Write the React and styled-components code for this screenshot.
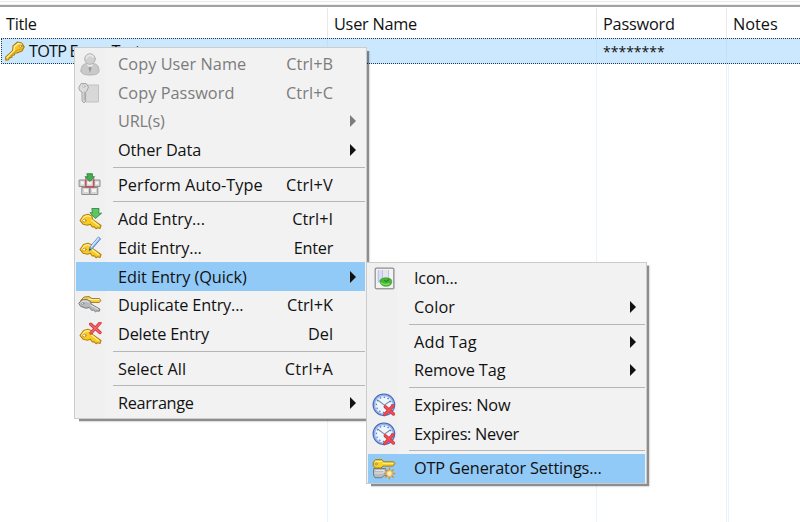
import React from "react";
import styled, { createGlobalStyle } from "styled-components";

const Global = createGlobalStyle`
  * { box-sizing: border-box; }
  body { margin: 0; background: #fff; overflow: hidden; }
`;

const Window = styled.div`
  position: relative;
  display: flex;
  flex-direction: column;
  width: 800px;
  height: 522px;
  overflow: hidden;
  background: #fff;
  color: #111;
  font: 16.3px/28px "Open Sans", "Noto Sans", sans-serif;
  white-space: pre;
`;
const TopEdge = styled.div`
  flex: none;
  height: 7px;
  border-bottom: 2px solid #a2a2a2;
  background: linear-gradient(#fff 0 1px, #e9e9e9 1px 2px, #fff 2px 4px, #eee 4px 5px);
`;
const Columns = styled.div`
  display: grid;
  grid-template-columns: 328px 269px 130px 1fr;
`;
const Header = styled(Columns)`
  flex: none;
  height: 31px;
  padding-top: 1px;
`;
const HeaderCell = styled.div`
  padding: 2px 0 0 6px;
  border-right: 1px solid #e6e9ec;
  letter-spacing: ${(p) => p.$track || 0}px;
  &:last-child { border-right: 0; }
`;
const EntryRow = styled(Columns)`
  flex: none;
  height: 26px;
  margin-left: 1px;
  border: 1px dotted #26384a;
  border-right: 0;
  background: #cce8ff;
  grid-template-columns: 326px 269px 130px 1fr;
`;
const EntryCell = styled.div`
  display: flex;
  align-items: center;
  height: 24px;
  padding: 1px 0 0 6px;
  line-height: 23px;
  border-right: 1px solid #c0e0f8;
  letter-spacing: ${(p) => p.$track || 0}px;
  svg { margin: -2px 3px 0 -4px; flex: none; }
  &:last-child { border-right: 0; }
`;
const Mask = styled.span`
  padding-bottom: 1px;
  font-size: 14px;
  letter-spacing: 0;
`;
const Body = styled(Columns)`
  flex: 1;
`;
const BodyCell = styled.div`
  border-right: 1px solid #e8f3fb;
  &:last-child { border-right: 0; border-left: 1px solid #e8f3fb; margin-left: 1px; }
`;
const Menu = styled.div`
  --gutter: ${(p) => p.$gutter}px;
  position: absolute;
  left: ${(p) => p.$x}px;
  top: ${(p) => p.$y}px;
  width: ${(p) => p.$w}px;
  padding: 1.6px 1px 0.5px;
  border: 1px solid #ccc;
  background: linear-gradient(90deg, #f0f0f0 0 30px, #f2f2f2 31px);
  box-shadow: 2px 2px 1px rgba(0, 0, 0, 0.4), 3px 3px 2px rgba(0, 0, 0, 0.08);
  clip-path: polygon(0 0, 100% 0, 100% 4px, calc(100% + 6px) 4px, calc(100% + 6px) calc(100% + 6px), 5px calc(100% + 6px), 5px 100%, 0 100%);
`;
const Item = styled.div`
  display: grid;
  grid-template-columns: var(--gutter) 1fr auto 32px;
  align-items: center;
  height: 28.75px;
  color: ${(p) => (p.$disabled ? "#7c7c7c" : "#111")};
  background: ${(p) => (p.$active ? "#91c9f7" : "transparent")};
`;
const IconSlot = styled.span`
  display: flex;
  padding-left: calc((var(--gutter) - 38px) / 2);
`;
const Label = styled.span`
  letter-spacing: ${(p) => p.$track}px;
`;
const Shortcut = styled.span`
  letter-spacing: ${(p) => p.$track}px;
`;
const Arrow = styled.span`
  justify-self: end;
  margin-right: 9px;
  border-left: 6.5px solid currentColor;
  border-top: 6px solid transparent;
  border-bottom: 6px solid transparent;
`;
const Separator = styled.div`
  height: 5.75px;
  padding: 2px 0 0 calc(var(--gutter) - 5px);
  &::after {
    content: "";
    display: block;
    height: 1px;
    background: #b6b6b6;
  }
`;

const Svg = (p) => <svg width={p.size || 24} height={p.size || 24} viewBox="0 0 24 24" strokeLinejoin="round" strokeLinecap="round" fill="none">{p.children}</svg>;

const SideKey = ({ fill = "#f8cb22", edge = "#b58312", shine = "#fff09a" }) => (
  <g>
    <path d="M2 13.5 5.5 8.5 10 7.2 14 9 14.5 12.4 23 18.5 22 21.5 19.5 20.8 18.2 21.8 16 19.6 14.3 20 12.2 17.2 9.5 18.2 5 17.2Z" fill={fill} stroke={edge} strokeWidth="1.1" />
    <path d="M4 13.2 6.5 9.6 10 8.6 12.6 9.8M13.5 13 20.5 18.4" stroke={shine} strokeWidth="1.2" />
    <ellipse cx="6.3" cy="13.6" rx="1.7" ry="1.4" fill="#fff" stroke={edge} strokeWidth=".8" />
  </g>
);
const DownArrow = () => <path d="M14.2 1.5h6.8l-.4 4.7h3L17.4 11.5 12 5.7h2Z" fill="#5cc665" stroke="#2f8c40" strokeWidth=".9" />;
const RedCross = () => (
  <g>
    <path d="M12.7 2.2 22 10.5M22 1 13 11" stroke="#d23a40" strokeWidth="3.3" />
    <path d="M12.7 2.2 22 10.5M22 1 13 11" stroke="#f2666b" strokeWidth="1.5" />
  </g>
);

const icons = {
  user: (
    <Svg>
      <path d="M3 19c0-4 1.5-7 5.2-7.3h7.6C19.5 12 21 15 21 19c0 2.6-3 4-9 4s-9-1.4-9-4Z" fill="#c9c9c9" stroke="#b4b4b4" />
      <path d="M8.5 12.2 12 16l3.5-3.8Z" fill="#eee" />
      <path d="m12 14-1.4 2.2L12 21l1.4-4.8Z" fill="#999" />
      <circle cx="12" cy="7" r="5.3" fill="#d0d0d0" stroke="#b4b4b4" />
      <path d="M8.5 6c1-3 5-3.5 6.5-1" stroke="#e8e8e8" strokeWidth="1.7" />
    </Svg>
  ),
  password: (
    <Svg>
      <path d="M8 4h12.5v17H8Z" fill="#d8d8d8" stroke="#c2c2c2" />
      <path d="M1 6.2 3 2.5h5.2L10.5 6 9 9.8 7.6 11v9L6 22l-2-2V11L2 9.8Z" fill="#dcdcdc" stroke="#a5a5a5" />
      <circle cx="5.8" cy="5.3" r="1.2" fill="#f6f6f6" stroke="#aaa" strokeWidth=".7" />
      <path d="M6.2 11v8" stroke="#aaa" />
    </Svg>
  ),
  autotype: (
    <Svg>
      <g fill="#d5d5d5" stroke="#8e8e8e">
        <path d="M1.5 7h5.8v6.5H1.5ZM8.3 7h7v6.5h-7ZM16.3 7H22v6.5h-5.7ZM4.2 14.5h7.3v7H4.2ZM12.5 14.5h7.3v7h-7.3Z" />
      </g>
      <path d="M3 8.5h3v3H3ZM9.5 8.5h4v3h-4ZM17.5 8.5h3v3h-3ZM6 16h4v3H6ZM14 16h4v3h-4Z" fill="#f4f4f4" />
      <path d="M7.8 5.5v8.4h8V5.5" stroke="#d33c48" strokeWidth="1.1" />
      <path d="M9.2.7h5.2v3h2.2L11.8 8.5 7 3.7h2.2Z" fill="#46ad50" stroke="#267c37" strokeWidth=".8" />
    </Svg>
  ),
  add: <Svg><SideKey /><DownArrow /></Svg>,
  edit: (
    <Svg>
      <SideKey />
      <path d="m11.2 14.5 1.2-4 8-9.5 2.2 1.8-8.1 9.6Z" fill="#9cc3f6" stroke="#4774bd" strokeWidth=".9" />
      <path d="m13.3 10.5 7.3-8.3" stroke="#e1f0ff" strokeWidth="1.1" />
      <path d="m11.2 14.5.7-2.2 1.1.9Z" fill="#333" />
    </Svg>
  ),
  duplicate: (
    <Svg>
      <path d="m3 7 3-3 5-.5 3 2h7.5l1.5 2.2-2 1.8H11L5 11Z" fill="#f6cd42" stroke="#aa8129" />
      <path d="M10 6.5h11" stroke="#fff0a6" />
      <g transform="translate(0 -1)"><path d="m1 11 3-3.2 5-.3 3.8 2 .2 2.5 9 5.2-.7 2-2.5-.3-1.2 1.1-2-2-2 .3-2.2-2.8-3.4.7L3 14.5Z" fill="#b8b9bb" stroke="#77797c" /><path d="m3 10.5 2-1.4h4l2 1.4M13 13.2l7 4" stroke="#e7e7e7" /><circle cx="4.8" cy="11.5" r="1" fill="#fff" stroke="#77797c" strokeWidth=".6" /></g>
    </Svg>
  ),
  delete: <Svg><SideKey /><RedCross /></Svg>,
  picture: (
    <Svg>
      <rect x="3.2" y="2.2" width="18.5" height="20.3" rx="1" fill="#f3f3f3" stroke="#8c8c8c" strokeWidth="1.2" />
      <path d="M5.3 4h5.3v13H5.3Z" fill="#d8ddf5" /><path d="M11 4h6v12h-6Z" fill="#e5e5ee" />
      <path d="M6.5 4.5v11M10.5 4.5v9M16.5 4.5v7" stroke="#bdc4e5" />
      <path d="M8 15c0-2 2.5-3.2 6-3.2 3.8 0 5.8 1.3 5.8 3.7 0 3-2 4.8-5.6 4.8S8 18.5 8 15Z" fill="#45b536" stroke="#3b9b36" strokeWidth=".6" />
      <path d="m12.5 14.4 2 1.2 2.5-2.2" stroke="#297e29" strokeWidth="1.1" /><path d="M9.5 17c2 1.5 5 1.8 7.5.8" stroke="#83dd57" strokeWidth="1.5" />
      <path d="M22 3v20H4.5" stroke="#aaa" />
    </Svg>
  ),
  expire: (
    <Svg>
      <circle cx="11.9" cy="11.8" r="10.6" fill="#edf6ff" stroke="#4c69bb" strokeWidth="1.5" />
      <circle cx="11.9" cy="11.8" r="9.5" stroke="#8fb2ec" strokeWidth="1.4" />
      <circle cx="11.9" cy="11.8" r="7.6" stroke="#527bb8" strokeWidth="1.3" strokeDasharray=".5 3.48" />
      <path d="m5.7 7 6.7 5.1 5.5-3.9" stroke="#7a8b9c" strokeWidth="1.1" />
      <g transform="translate(4.2 10.4) scale(.82)"><path d="m11 4 10 9M20.5 3 10.5 13.5" stroke="#d3323a" strokeWidth="4" /><path d="m11 4 10 9M20.5 3 10.5 13.5" stroke="#f05258" strokeWidth="1.9" /></g>
    </Svg>
  ),
  otp: (
    <Svg>
      <path d="M2 12.5h11.5v2.3h3.5v4.7h-4.8l-2.5 2.2H3L1.5 19v-5Z" fill="#b6bcc1" stroke="#747d82" />
      <path d="M4 14.5h8v2.5H3" stroke="#e2e5e7" strokeWidth="1.2" />
      <path d="m1.5 6 2-2.4h6.4l1.8 2.2h10l1.2 1.8-2 2.5H11L9 12H3.2L1.5 10Z" fill="#f5d130" stroke="#a37a0c" />
      <path d="M3.5 5.5h6M11 7.3h10" stroke="#fff19a" /><circle cx="4.2" cy="8" r="1" fill="#fff" stroke="#8b6c10" strokeWidth=".6" />
      <path d="M17.5 12.2v10.6M12.2 17.5h10.6M13.8 13.8l7.5 7.5M21.3 13.8l-7.5 7.5" stroke="#cf9140" strokeWidth="1.4" />
      <circle cx="17.5" cy="17.5" r="2.9" fill="#fff2a4" stroke="#e5ac4c" />
    </Svg>
  ),
};

const EntryKey = () => (
  <Svg size={22}>
    <path d="M2 22 1.8 18.8 9.5 11.5 9.8 6.4 14.8 2.2 19.3 3.2 22 7.5 19.6 12 14.7 14 11.8 14.2 11.3 16.2 9 16.5 8.5 19 6 19.2 5 21.6Z" fill="#f6c929" stroke="#a7790e" strokeWidth="1.2" />
    <path d="m3.2 19 7.8-7.3.3-4.4 4-3.5 3.4.7" stroke="#fff09c" strokeWidth="1.4" />
    <path d="m7 17.5 7.5-6.5 4.5-1.2" stroke="#dfa514" strokeWidth="1.6" />
    <ellipse cx="18" cy="6.8" rx="1.5" ry="1.2" fill="#fff" stroke="#956c0c" strokeWidth=".7" />
  </Svg>
);

const mainMenu = [
  { label: "Copy User Name", key: "Ctrl+B", icon: "user", disabled: true, track: 0.05 },
  { label: "Copy Password", key: "Ctrl+C", icon: "password", disabled: true, track: 0.05, keyTrack: 0.1 },
  { label: "URL(s)", disabled: true, arrow: true, track: -0.2 },
  { label: "Other Data", arrow: true, track: -0.1 },
  null,
  { label: "Perform Auto-Type", key: "Ctrl+V", icon: "autotype", track: 0.03, keyTrack: 0.2 },
  null,
  { label: "Add Entry...", key: "Ctrl+I", icon: "add" },
  { label: "Edit Entry...", key: "Enter", icon: "edit", track: -0.15, keyTrack: -0.3 },
  { label: "Edit Entry (Quick)", arrow: true, active: true, track: -0.05 },
  { label: "Duplicate Entry...", key: "Ctrl+K", icon: "duplicate", track: -0.17 },
  { label: "Delete Entry", key: "Del", icon: "delete", track: -0.17 },
  null,
  { label: "Select All", key: "Ctrl+A", track: 0.05, keyTrack: 0.3 },
  null,
  { label: "Rearrange", arrow: true, track: -0.33 },
];
const quickMenu = [
  { label: "Icon...", icon: "picture", track: -0.2 },
  { label: "Color", arrow: true, track: 0.1 },
  null,
  { label: "Add Tag", arrow: true, track: 0.2 },
  { label: "Remove Tag", arrow: true, track: -0.1 },
  null,
  { label: "Expires: Now", icon: "expire", track: -0.17 },
  { label: "Expires: Never", icon: "expire", track: -0.3 },
  null,
  { label: "OTP Generator Settings...", icon: "otp", active: true, track: -0.14 },
];

const MenuItems = ({ items }) => items.map((it, i) => it ? (
  <Item key={i} $disabled={it.disabled} $active={it.active}>
    <IconSlot>{icons[it.icon]}</IconSlot>
    <Label $track={it.track || 0}>{it.label}</Label>
    <Shortcut $track={it.keyTrack || 0}>{it.key}</Shortcut>
    {it.arrow && <Arrow />}
  </Item>
) : <Separator key={i} />);

export default function App() {
  return (
    <Window>
      <Global />
      <TopEdge />
      <Header>
        <HeaderCell $track={-0.3}>Title</HeaderCell>
        <HeaderCell $track={-0.25}>User Name</HeaderCell>
        <HeaderCell $track={-0.2}>Password</HeaderCell>
        <HeaderCell>Notes</HeaderCell>
      </Header>
      <EntryRow>
        <EntryCell $track={-0.8}><EntryKey />TOTP Exam Test</EntryCell>
        <EntryCell />
        <EntryCell><Mask>********</Mask></EntryCell>
        <EntryCell />
      </EntryRow>
      <Body><BodyCell /><BodyCell /><BodyCell /><BodyCell /></Body>
      <Menu $x={74} $y={47} $w={293} $gutter={42}><MenuItems items={mainMenu} /></Menu>
      <Menu $x={366} $y={261.5} $w={281} $gutter={46}><MenuItems items={quickMenu} /></Menu>
    </Window>
  );
}
